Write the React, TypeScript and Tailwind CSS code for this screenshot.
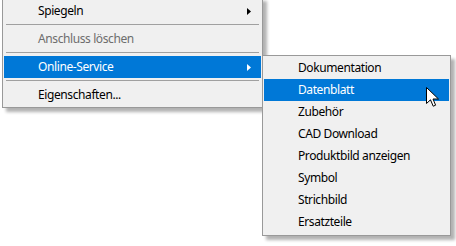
const font = { fontFamily: '"Noto Sans", "Open Sans", sans-serif' };

function Arrow() {
  return (
    <svg width="4" height="7" viewBox="0 0 4 7" className="absolute right-[10px] top-[8px]">
      <path d="M0 0 L4 3.5 L0 7 Z" fill="currentColor" />
    </svg>
  );
}

function Item({
  label,
  active,
  disabled,
  sub,
}: {
  label: string;
  active?: boolean;
  disabled?: boolean;
  sub?: boolean;
}) {
  return (
    <div
      className={
        "relative h-[22px] pl-[34px] flex items-center text-[12px] tracking-[-0.4px] leading-none " +
        (active ? "bg-[#0078d7] text-white" : disabled ? "text-[#6d6d6d]" : "text-black")
      }
    >
      {label}
      {sub && <Arrow />}
    </div>
  );
}

function Sep() {
  return (
    <div className="h-[6px] pt-[2px] px-[2px]">
      <div className="h-px bg-[#a0a0a0]" />
    </div>
  );
}

function Cursor() {
  return (
    <svg width="14" height="21" viewBox="0 0 14 21" className="absolute left-[426px] top-[87px]">
      <path
        d="M0.5 0.5 L0.5 16.5 L4.5 12.8 L7.2 19.2 L9.6 18.2 L7 12 L12.5 12 Z"
        fill="#fff"
        stroke="#000"
        strokeWidth="1"
        strokeLinejoin="miter"
      />
    </svg>
  );
}

export default function App() {
  return (
    <div className="relative w-[456px] h-[246px] bg-white overflow-hidden" style={font}>
      <div className="absolute left-[2px] top-[-3px] w-[261px] border border-[#999999] bg-[#f0f0f0] pt-[2px] pb-[1px] px-px shadow-[4px_4px_3px_rgba(0,0,0,0.3)]">
        <Item label="Spiegeln" sub />
        <Sep />
        <Item label="Anschluss löschen" disabled />
        <Sep />
        <Item label="Online-Service" sub active />
        <Sep />
        <Item label="Eigenschaften..." />
      </div>

      <div className="absolute left-[262px] top-[55px] w-[189px] border border-[#999999] bg-[#f0f0f0] pt-[1px] pb-[2px] px-px shadow-[4px_4px_3px_rgba(0,0,0,0.3)]">
        <Item label="Dokumentation" />
        <Item label="Datenblatt" active />
        <Item label="Zubehör" />
        <Item label="CAD Download" />
        <Item label="Produktbild anzeigen" />
        <Item label="Symbol" />
        <Item label="Strichbild" />
        <Item label="Ersatzteile" />
      </div>

      <Cursor />
    </div>
  );
}
